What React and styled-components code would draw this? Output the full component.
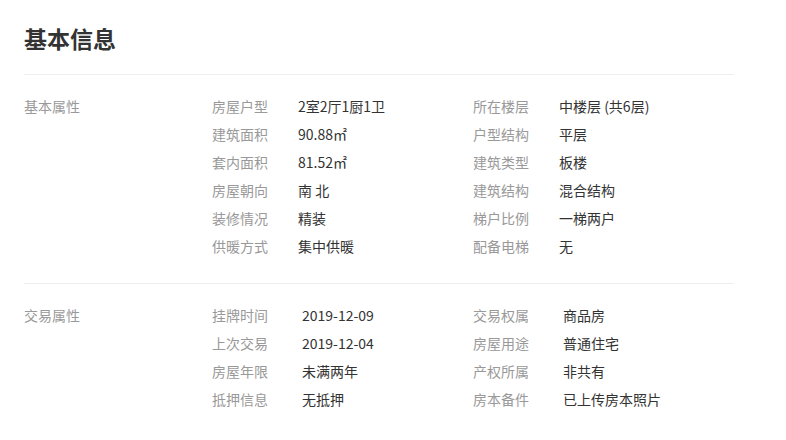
import React from "react";
import styled, { createGlobalStyle } from "styled-components";

const GlobalStyle = createGlobalStyle`
  body {
    margin: 0;
    background: #fff;
    font-family: "Noto Sans CJK SC", "Microsoft YaHei", sans-serif;
  }
`;

const Wrap = styled.div`
  width: 710px;
  padding: 0 24px;
`;

const Header = styled.div`
  padding: 23px 0 21px;
  border-bottom: 1px solid #eeeeee;
`;

const Title = styled.h2`
  margin: 0;
  font-size: 23px;
  line-height: 30px;
  font-weight: 700;
  color: #333;
`;

const Section = styled.div`
  display: flex;
  padding: 17px 0 23px;
  border-bottom: ${(p) => (p.last ? "none" : "1px solid #eeeeee")};
`;

const SectionName = styled.div`
  width: 188px;
  flex-shrink: 0;
  font-size: 14px;
  line-height: 28px;
  color: #999;
`;

const Grid = styled.div`
  display: grid;
  grid-template-columns: 261px 1fr;
`;

const Item = styled.div`
  display: flex;
  font-size: 14px;
  line-height: 28px;
`;

const Label = styled.span`
  width: ${(p) => p.w}px;
  flex-shrink: 0;
  color: #999;
`;

const Value = styled.span`
  color: #333;
`;

const basic = [
  ["房屋户型", "2室2厅1厨1卫"],
  ["所在楼层", "中楼层 (共6层)"],
  ["建筑面积", "90.88㎡"],
  ["户型结构", "平层"],
  ["套内面积", "81.52㎡"],
  ["建筑类型", "板楼"],
  ["房屋朝向", "南 北"],
  ["建筑结构", "混合结构"],
  ["装修情况", "精装"],
  ["梯户比例", "一梯两户"],
  ["供暖方式", "集中供暖"],
  ["配备电梯", "无"],
];

const trade = [
  ["挂牌时间", "2019-12-09"],
  ["交易权属", "商品房"],
  ["上次交易", "2019-12-04"],
  ["房屋用途", "普通住宅"],
  ["房屋年限", "未满两年"],
  ["产权所属", "非共有"],
  ["抵押信息", "无抵押"],
  ["房本备件", "已上传房本照片"],
];

const InfoSection = ({ name, items, labelWidth, last }) => (
  <Section last={last}>
    <SectionName>{name}</SectionName>
    <Grid>
      {items.map(([k, v]) => (
        <Item key={k}>
          <Label w={labelWidth}>{k}</Label>
          <Value>{v}</Value>
        </Item>
      ))}
    </Grid>
  </Section>
);

const App = () => (
  <>
    <GlobalStyle />
    <Wrap>
      <Header>
        <Title>基本信息</Title>
      </Header>
      <InfoSection name="基本属性" items={basic} labelWidth={86} />
      <InfoSection name="交易属性" items={trade} labelWidth={90} last />
    </Wrap>
  </>
);

export default App;
